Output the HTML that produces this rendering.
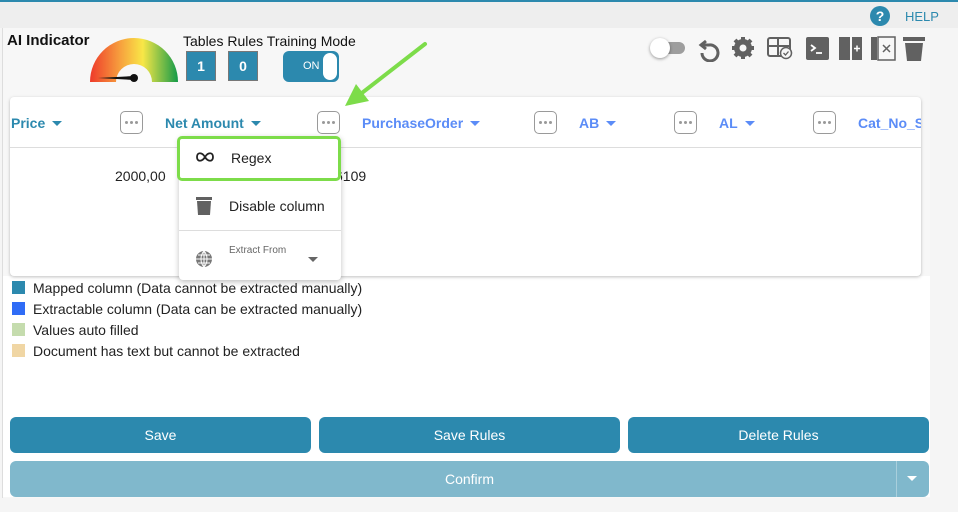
<!DOCTYPE html>
<html><head><meta charset="utf-8"><style>
*{box-sizing:border-box;margin:0;padding:0}
body{width:958px;height:512px;overflow:hidden;background:#f5f5f5;font-family:"Liberation Sans",sans-serif;position:relative}
.a{position:absolute}
.hdr{color:#2c89ae;font-weight:bold;font-size:14px}
.hdr2{color:#5b8cf7;font-weight:bold;font-size:14px}
.car{display:inline-block;width:0;height:0;border-left:5px solid transparent;border-right:5px solid transparent;border-top:5px solid currentColor;margin-left:7px;vertical-align:2px}
.dots{position:absolute;top:111px;width:23px;height:23px;border:1px solid #9a9a9a;border-radius:5px;background:#fff}
.dots::before{content:"";position:absolute;left:4px;top:9px;width:3px;height:3px;border-radius:50%;background:#999;box-shadow:5px 0 0 #999,10px 0 0 #999}
.btn{position:absolute;top:417px;height:36px;width:301px;background:#2c89ae;border-radius:6px;color:#fff;font-size:14px;text-align:center;line-height:36px}
.lg{position:absolute;left:12px;width:13px;height:13px}
.lt{position:absolute;left:33px;font-size:14px;color:#222}
</style></head><body>
<div class="a" style="left:0;top:0;width:958px;height:2px;background:#2c89ae"></div>
<div class="a" style="left:0;top:2px;width:958px;height:26px;background:#eeeeee"></div>
<div class="a" style="left:2px;top:28px;width:928px;height:470px;background:#f7f7f7;border-left:1px solid #ddd"></div>
<div class="a" style="left:3px;top:276px;width:927px;height:221px;background:#fff"></div>
<svg class="a" style="left:869px;top:5px" width="22" height="22"><circle cx="11" cy="11" r="10" fill="#2c89ae"/><text x="11" y="16" font-size="14" font-weight="bold" fill="#fff" text-anchor="middle" font-family="Liberation Sans">?</text></svg>
<div class="a" style="left:905px;top:9px;font-size:13px;color:#2c89ae">HELP</div>
<div class="a" style="left:7px;top:32px;font-size:15px;font-weight:bold;color:#111">AI Indicator</div>
<svg class="a" style="left:88px;top:36px" width="94" height="50">
<defs><linearGradient id="g" x1="0" x2="1" y1="0" y2="0"><stop offset="0" stop-color="#ee3a2a"/><stop offset="0.35" stop-color="#f7a23e"/><stop offset="0.6" stop-color="#f8e747"/><stop offset="1" stop-color="#139a48"/></linearGradient></defs>
<path d="M2 46 A44 44 0 0 1 90 46 L64 46 A18 18 0 0 0 28 46 Z" fill="url(#g)"/>
<path d="M10 42 L46 40 L46 44 Z" fill="#111"/><circle cx="46" cy="42" r="4" fill="#111"/>
</svg>
<div class="a" style="left:183px;top:33px;font-size:14px;color:#111">Tables Rules Training Mode</div>
<div class="a" style="left:186px;top:51px;width:30px;height:30px;background:#2c89ae;border:1px solid #777;color:#fff;font-weight:bold;font-size:14px;text-align:center;line-height:28px">1</div>
<div class="a" style="left:228px;top:51px;width:30px;height:30px;background:#2c89ae;border:1px solid #777;color:#fff;font-weight:bold;font-size:14px;text-align:center;line-height:28px">0</div>
<div class="a" style="left:283px;top:51px;width:56px;height:31px;background:#2c89ae;border-radius:6px"><span style="position:absolute;left:20px;top:9px;font-size:11px;color:#fff">ON</span><div style="position:absolute;right:2px;top:2px;width:14px;height:27px;background:#fff;border-radius:7px"></div></div>
<div class="a" style="left:654px;top:42px;width:31px;height:12px;background:#9e9e9e;border-radius:6px"></div>
<div class="a" style="left:650px;top:38px;width:20px;height:20px;background:#fff;border-radius:50%;box-shadow:0 1px 3px rgba(0,0,0,.4)"></div>
<svg class="a" style="left:698px;top:36px" width="230" height="26" fill="#616161">
<path d="M8 5 L3 9 L8 13 M4 9 H11 A8 8 0 1 1 4 17" stroke="#616161" stroke-width="3" fill="none"/>
<circle cx="45" cy="12" r="9"/><g stroke="#616161" stroke-width="4"><path d="M45 1V23M34 12H56M37 4L53 20M53 4L37 20"/></g><circle cx="45" cy="12" r="3.5" fill="#f7f7f7"/>
<rect x="70" y="2" width="22" height="18" rx="2" fill="none" stroke="#616161" stroke-width="2"/><path d="M70 10H92M80 2V20" stroke="#616161" stroke-width="2"/><circle cx="88" cy="17" r="5.5" fill="#f7f7f7" stroke="#616161" stroke-width="1.5"/><path d="M85.5 17l2 2 3-3.5" stroke="#616161" stroke-width="1.3" fill="none"/>
<rect x="108" y="1" width="23" height="23" rx="2"/><path d="M113 9l4 3-4 3M118 17h6" stroke="#fff" stroke-width="1.8" fill="none"/>
<rect x="141" y="1" width="11" height="23"/><rect x="154" y="1" width="10" height="23"/><path d="M156 12.5h6M159 9.5v6" stroke="#fff" stroke-width="1.5"/>
<rect x="173" y="1" width="6" height="23"/><rect x="180" y="1" width="17" height="23" fill="none" stroke="#616161" stroke-width="1.5"/><path d="M185 9l7 7M192 9l-7 7" stroke="#616161" stroke-width="1.5"/>
<rect x="205" y="1" width="22" height="4"/><path d="M207 7H225L223 25H209Z"/>
</svg>
<div class="a" style="left:10px;top:97px;width:911px;height:179px;background:#fff;border-radius:4px;box-shadow:0 1px 3px rgba(0,0,0,.25)"></div>
<div class="a" style="left:10px;top:147px;width:911px;height:1px;background:#ddd"></div>
<div class="a hdr" style="left:11px;top:115px">Price<span class="car"></span></div>
<div class="dots" style="left:120px"></div>
<div class="a hdr" style="left:165px;top:115px">Net Amount<span class="car"></span></div>
<div class="dots" style="left:317px"></div>
<div class="a hdr2" style="left:362px;top:115px">PurchaseOrder<span class="car"></span></div>
<div class="dots" style="left:534px"></div>
<div class="a hdr2" style="left:579px;top:115px">AB<span class="car"></span></div>
<div class="dots" style="left:674px"></div>
<div class="a hdr2" style="left:719px;top:115px">AL<span class="car"></span></div>
<div class="dots" style="left:813px"></div>
<div class="a hdr2" style="left:858px;top:115px;width:63px;overflow:hidden;white-space:nowrap">Cat_No_Size</div>
<div class="a" style="left:115px;top:168px;font-size:14px;color:#222">2000,00</div>
<div class="a" style="left:335px;top:168px;font-size:14px;color:#222">6109</div>
<div class="a" style="left:179px;top:136px;width:162px;height:144px;background:#fff;border-radius:4px;box-shadow:0 2px 6px rgba(0,0,0,.25)"></div>
<div class="a" style="left:177px;top:136px;width:164px;height:45px;border:3px solid #7ddc4a;border-radius:5px;background:#fff"></div>
<svg class="a" style="left:195px;top:150px" width="20" height="14"><path d="M10 7C7 2 2 2 2 7S7 12 10 7 18 2 18 7 13 12 10 7" fill="none" stroke="#222" stroke-width="1.8"/></svg>
<div class="a" style="left:231px;top:150px;font-size:14px;color:#222">Regex</div>
<svg class="a" style="left:195px;top:196px" width="18" height="20" fill="#616161"><rect x="1" y="1" width="16" height="3"/><path d="M2 5H16L15 19H3Z"/></svg>
<div class="a" style="left:229px;top:198px;font-size:14px;color:#222">Disable column</div>
<div class="a" style="left:179px;top:230px;width:162px;height:1px;background:#ddd"></div>
<svg class="a" style="left:195px;top:250px" width="18" height="18"><circle cx="9" cy="9" r="8" fill="#777"/><path d="M1 9H17M9 1V17M3 5H15M3 13H15M9 1C5 5 5 13 9 17M9 1C13 5 13 13 9 17" stroke="#fff" stroke-width="1" fill="none"/></svg>
<div class="a" style="left:229px;top:245px;font-size:10px;color:#666">Extract From</div>
<div class="a" style="left:308px;top:257px;border-left:5px solid transparent;border-right:5px solid transparent;border-top:5px solid #666"></div>
<svg class="a" style="left:0;top:0" width="958" height="512" pointer-events="none"><path d="M425 44L358 96" stroke="#7ddc4a" stroke-width="4" stroke-linecap="round"/><path d="M345 106L356 84L369 101Z" fill="#7ddc4a"/></svg>
<div class="lg" style="top:281px;background:#2c89ae"></div><div class="lt" style="top:280px">Mapped column (Data cannot be extracted manually)</div>
<div class="lg" style="top:302px;background:#2f6cf6"></div><div class="lt" style="top:301px">Extractable column (Data can be extracted manually)</div>
<div class="lg" style="top:323px;background:#c5dcae"></div><div class="lt" style="top:322px">Values auto filled</div>
<div class="lg" style="top:344px;background:#f0d6a4"></div><div class="lt" style="top:343px">Document has text but cannot be extracted</div>
<div class="btn" style="left:10px">Save</div>
<div class="btn" style="left:319px">Save Rules</div>
<div class="btn" style="left:628px">Delete Rules</div>
<div class="a" style="left:10px;top:461px;width:919px;height:36px;background:#80b8cc;border-radius:6px;color:#fff;font-size:14px;text-align:center;line-height:36px">Confirm</div>
<div class="a" style="left:896px;top:461px;width:1px;height:36px;background:#a9cfdc"></div>
<div class="a" style="left:907px;top:476px;border-left:5px solid transparent;border-right:5px solid transparent;border-top:5px solid #fff"></div>
</body></html>
